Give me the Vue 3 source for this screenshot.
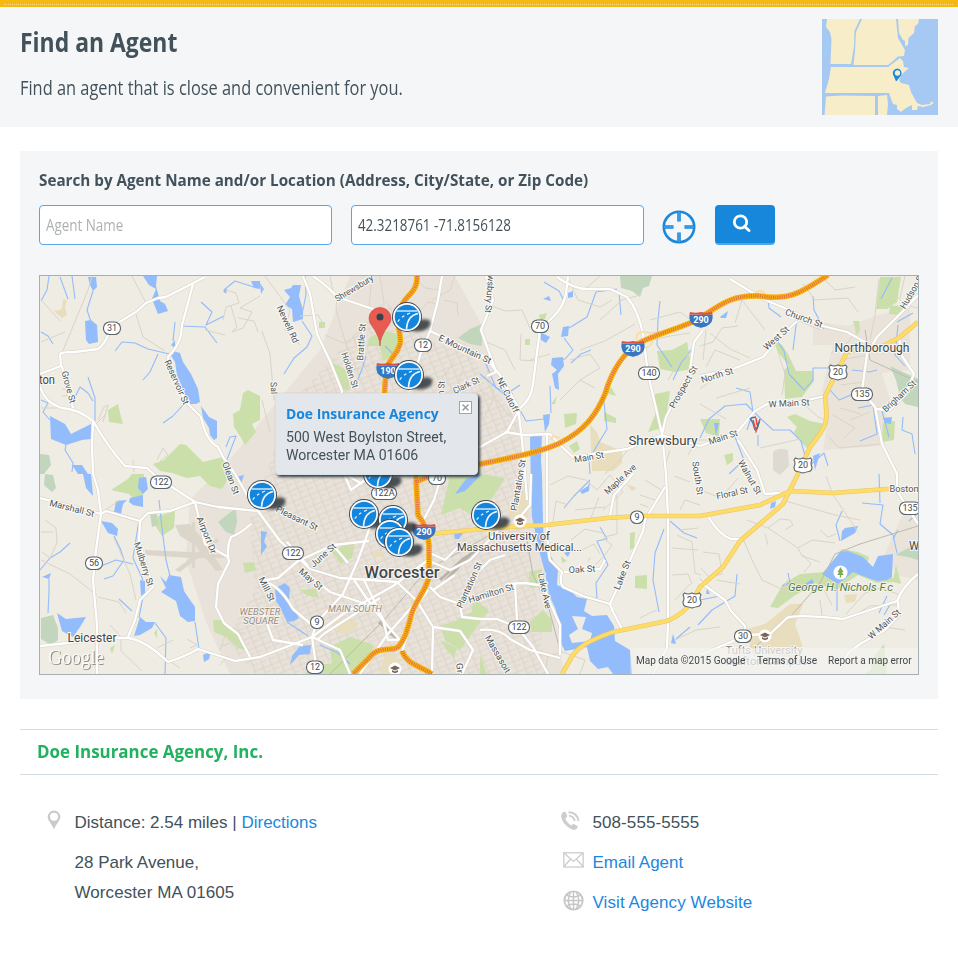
<script setup>
import { ref } from 'vue'

const agentName = ref('')
const place = ref('42.3218761 -71.8156128')
const popupOpen = ref(true)

// Condenses an element horizontally so its text spans the given width.
const vFit = {
  mounted(el, { value }) {
    el.style.transform = `scaleX(${value / el.offsetWidth})`
  },
}

const water = [
  'M170 354L173 351L180 353L183 362L191 374L198 389L200 402L196 404L190 404L183 392L177 375L175 362Z',
  'M201 406L209 417L217 421L217 438L214 440L210 435L209 428L203 418Z',
  'M143 276H157L156 286L160 301L165 304L168 311L158 314L152 299L156 289L149 285Z',
  'M88 277H96L97 287L93 291L90 285Z', 'M85 321L91 320L97 325L98 342L89 344L86 340Z',
  'M50 416L65 424L71 434L91 424V439L82 440L66 445L51 439Z', 'M72 465L82 465L88 474H78Z',
  'M171 345L175 340L175 348Z', 'M223 291L227 288L226 294Z', 'M251 281H260V289L254 288Z',
  'M160 576L166 582L169 575L181 577L184 591L188 597L195 607V621L188 622L180 616L176 601L161 592L166 588Z',
  'M140 617L146 622L155 622L152 628L140 635L134 636Z', 'M57 613L66 619L86 617L80 627L73 637L62 631Z',
  'M101 521L112 523L118 529L117 536L108 533Z', 'M83 474H91L93 496L86 488Z',
  'M139 478L146 477L148 489L143 494L138 488Z', 'M130 498L143 495V507L133 505L129 502Z',
  'M116 501L127 500L123 504L121 514L114 512Z', 'M140 580L145 581L145 593L141 596Z', 'M42 577L51 573L49 579Z',
  'M203 655L211 651L209 659L204 662Z', 'M236 477L244 475L241 484Z',
  'M284 290L291 288L293 285L301 285L299 296L303 310L303 319L293 322L292 309L285 305L290 297Z',
  'M260 283L264 289L261 294Z',
  'M261 531L267 532L264 542L267 546L261 555Z', 'M275 588L285 583L290 588L289 601L299 618L294 621L287 622L280 607L276 601Z',
  'M300 646L311 645L310 654L299 655L290 665L292 656Z', 'M482 474L466 479L455 494L465 491Z',
  'M552 358L563 357L564 366L558 374L559 390L555 388L552 374L557 370L551 365Z',
  'M563 327L569 326L568 336L561 337Z', 'M540 332L550 337L546 343L541 340Z', 'M543 415L550 414L549 424L545 432Z',
  'M530 437L542 433L541 460L542 474L543 522L544 541L558 571L557 585L571 591L577 597L587 599L584 611L592 616L607 615L614 626L615 641L630 650L632 674H613L608 667L598 669L590 661L587 647L565 651L560 641L556 610L549 594L545 572L540 554L532 517L531 490Z',
  'M454 533H463L459 539L455 539Z', 'M580 491L588 486L590 480L589 491L582 494Z', 'M564 553L571 550L568 557Z',
  'M822 574L840 552L848 551L863 557L873 567L878 556L893 554L892 577L887 580L877 581L860 575L853 572L838 584Z',
  'M842 531L845 528L858 526L855 533L841 541Z', 'M805 584L812 579L814 583L807 585Z', 'M813 456L820 453L815 470Z',
  'M714 423H719L716 436Z', 'M720 317L728 311L726 318L721 318Z', 'M883 418L892 417L891 424L885 423Z',
  'M707 588L710 594L706 594Z', 'M771 503L776 501L775 507L770 509Z', 'M673 634L676 644L671 643Z', 'M543 299L549 296L551 301Z', 'M568 293L573 291V297L568 298Z',
]

const parks = [
  'M153 464L164 460L180 444L186 445L203 462L223 457L229 466L236 474L227 480L222 489L210 486L200 476L187 478L172 473L160 471Z',
  'M111 490L128 479L132 474L144 474L143 496L138 504L129 494Z',
  'M233 414L240 410L243 393L248 390L260 396V420L252 424L256 432L245 445L240 436L234 427Z',
  'M108 410L118 404L120 413L123 424L109 422Z', 'M158 516L175 511L174 528L162 536L156 527Z',
  'M213 620L221 620L226 626L235 628L249 652L238 648L226 637L214 632Z', 'M110 648L115 645L112 654Z', 'M154 633L157 629L157 638Z',
  'M383 330L397 334V350L393 356L383 361L380 346L367 346L369 338Z', 'M328 362L340 366L347 371L350 389L342 391L336 376Z', 'M319 322L325 322V328L319 328Z',
  'M450 476H482V512L470 514L460 508L441 515Z', 'M330 551L355 542L352 558L340 564L336 556Z', 'M440 626L455 621L472 612L473 598L480 604L489 610L460 650L445 640Z',
  'M300 590L316 589L319 598L306 595Z', 'M350 637L374 645L363 674H305L312 664L332 664L330 647Z', 'M440 640L457 648L454 658L448 652Z',
  'M480 474L505 478L492 498L480 507Z', 'M480 655L487 674H480Z', 'M529 572L542 569L540 587L529 588Z', 'M530 622L543 610L552 620L552 632L532 632Z',
  'M657 351L672 350L687 342L692 369L675 372L660 369Z', 'M655 394L670 391L667 412L663 421L662 428L648 432L655 415Z',
  'M564 414L577 413L576 424L565 428Z', 'M604 412L616 418L616 423L604 421Z', 'M539 315L547 313L545 319L540 320Z', 'M525 339H530V345H525Z',
  'M606 393L611 387L616 396Z', 'M551 404L557 396L555 404Z', 'M569 446L577 441L580 449L574 453Z',
  'M880 277H901L897 302L887 309L876 309Z', 'M773 341L782 345L788 354L796 371L812 371L814 381L802 397L785 399L784 370L789 366L778 352Z',
  'M787 417L795 414L810 421L825 424L821 434L807 448L802 443L794 432L797 427Z', 'M700 419H720L719 437L706 433Z', 'M883 423L895 421L894 440L882 442Z',
  'M724 455L733 453V461L727 465Z', 'M853 321L859 321L860 330L857 336Z', 'M890 306L905 305L899 315L889 314Z',
  'M770 607L783 584L800 574L825 572L842 549L858 552L869 557L866 568L878 577L896 578L901 584L893 582L877 583L858 575L836 590L815 583L794 596L778 608Z',
  'M884 644L887 674H864L871 670V660Z', 'M635 576L647 575V589L635 588Z', 'M630 533L635 532L634 548L630 550Z', 'M587 645L598 644L600 648L588 650Z', 'M561 556L567 561L562 563Z', 'M896 565L901 583L893 580Z', 'M589 558L591 557L587 564Z', 'M243 563L254 562L256 570L245 573Z',
]

const reserves = [
  'M40 454L49 455L51 465L44 474H40Z', 'M45 474L53 475L56 488L52 492L44 485Z', 'M41 618L53 615L58 628L58 640L51 645L41 639Z',
  'M218 522L236 508L237 522L234 535L226 532Z', 'M150 513L157 514L158 525L152 527Z', 'M458 338L470 329L482 324V346L470 344Z',
  'M620 276H652L649 286L643 288L640 297L632 291L621 288Z', 'M890 366L918 379V407L905 404L900 397L896 380Z', 'M895 555L918 543V560L908 557Z',
]

const sands = [
  'M54 311L62 309L63 299L67 300L65 307L67 315L62 318Z', 'M590 424L598 434L600 442L622 451V463L613 471H592Z',
  'M747 629L765 624L790 604L803 604L795 624L803 647L799 659L752 651Z', 'M844 595L857 594L855 602L846 603Z', 'M335 620L353 619L358 628L342 634L333 627Z',
  'M508 505L527 489L528 517L509 518Z', 'M374 552H383V557H374Z', 'M387 650L400 660L397 674H379Z', 'M626 484L637 488L632 491Z',
]

const streams = [
  'M49 276L47 290L41 301', 'M60 277L68 299', 'M72 276L75 299', 'M93 291L87 310L91 322', 'M41 332L48 336L53 344',
  'M115 351L122 342L135 343L148 349L165 353L170 354', 'M158 354L150 372L143 380', 'M175 322L173 341', 'M180 326L205 327L217 343', 'M201 302L212 312L206 325L224 316',
  'M184 404L173 416L163 423', 'M75 397L80 387L88 393L93 401M88 377L95 398L95 421', 'M41 400L48 403L43 412L50 420', 'M66 445L65 450L73 463L72 472', 'M224 290L235 281L254 287',
  'M226 447L230 437L236 436L226 462L234 474', 'M159 500L162 528L166 560L170 576', 'M139 520L133 558L143 580M143 597L139 618', 'M155 623L166 638L165 674',
  'M101 566L116 560L133 564', 'M114 536L120 548L124 560L113 576L104 579', 'M70 543L60 552L50 558L40 570M49 579L49 592L48 613', 'M119 599L132 611', 'M195 622L199 649', 'M305 276L306 294L303 310M302 321L312 336L307 347L294 358L284 374',
  'M385 346L393 354', 'M366 356L362 369L354 389', 'M287 622L308 636M320 645L338 653L350 664', 'M520 385L505 395L480 374', 'M486 364L496 388L513 394',
  'M617 289L596 292L587 317L569 328M564 338L573 350L565 359L557 360', 'M571 363L581 354L591 350', 'M603 394L607 429L589 459L590 474', 'M550 386L551 413M520 410L526 421L544 419', 'M544 282L559 291L563 299',
  'M619 292L621 315', 'M660 301L658 320L657 345L672 367M691 350L681 363L673 380', 'M813 296L814 310L824 329', 'M768 299L769 308L781 317M797 317L793 350M778 342L784 351L789 374L804 390L813 380L813 368L829 368',
  'M852 370L870 372L877 370M851 395L839 400L830 390', 'M858 408L873 405L877 434L860 441', 'M700 438L709 419L725 406L746 404L760 418L773 430L790 430L801 441L808 467L824 453L828 466', 'M736 388L750 392L753 412L747 430M758 435L758 446',
  'M735 437L744 460L729 474', 'M903 417L902 430L912 434L915 454M882 411L889 437', 'M892 278L881 299M913 313L897 322', 'M898 325L895 355L905 366',
  'M590 480L574 496L564 508M600 527L607 539L597 541L608 565L596 583L597 600', 'M670 521L684 533L697 538', 'M664 529L655 553L653 580L659 612', 'M698 625L712 610L735 596L737 574',
  'M700 600L720 596M690 627L676 639', 'M842 511L836 525L840 541M862 503L883 505L880 524L893 535L897 553', 'M837 584V611M887 596L879 613M891 603L884 615', 'M879 474L880 503M920 511L909 521M893 539L898 530', 'M788 573L790 583L782 586',
]

const lanes = [
  'M62 353L88 290L92 276M41 342L65 332M132 276L146 303M136 314L143 337L165 351M133 460L134 472M205 330L225 335M41 300L60 321',
  'M223 320L226 307L239 303L236 293L226 290M231 306L237 327L232 332L243 328L252 312L240 308L260 296M238 318L254 321L258 332',
  'M41 408L58 408M98 420L104 407L108 405L103 422M106 414L96 424M62 389H67V396H62M157 460L163 448L168 455L160 461',
  'M265 276L290 310L285 330L300 345M262 331L270 354L274 400M330 276L333 292M337 297L336 310L353 368L345 390M372 276L369 307M380 276L384 303M300 316L318 315L325 327M325 335L343 343L360 335',
  'M349 370L370 366M413 276L425 288L440 290M455 276L450 290L432 300M420 311L428 302L436 304M444 300L457 303L458 315',
  'M262 400L270 432M455 361L442 378L455 392L462 371M482 340L505 350L515 370M492 306L505 311L522 310L530 328M487 370L495 398L510 417M480 390L493 400L485 416',
  'M567 276L578 300L600 307L612 300M585 289L600 276M640 295L622 300L600 320M635 324L605 341L580 350M530 360L550 354M521 334L520 360L537 361M570 360L590 354L600 368L580 380M560 400L580 380L595 388',
  'M650 320L680 312L700 326M649 333L665 331M652 340L670 336L690 333M694 350L680 360L668 380M700 389L712 380M716 398L750 388M700 404L726 419',
  'M700 346L713 342L722 328L738 326M710 333L730 349L750 358M706 367L715 350L740 360M706 330L703 360M735 323L742 300L765 330M778 352L785 374L782 395',
  'M795 319L820 330M803 284L815 300L848 298L858 312M821 276L835 290L855 287M879 279L875 315L870 340M897 296L905 305L918 308M905 276L900 298M840 360L868 355M841 385L864 382M831 353L846 344L860 328M833 415L855 428L844 438M870 412L850 420M840 408L861 414',
  'M805 405L818 417L825 420M829 437L839 448L880 444M760 448L800 439M688 455L697 440L720 440M670 450L665 465M630 447L620 460L605 474',
  'M41 560L70 574L97 595M98 597L119 602L126 613M45 520L56 528L57 543L50 558L42 552M114 538L130 574L136 600M41 532H53M100 514L120 500',
  'M110 625L121 637L121 651L142 671M187 639L197 645L190 648M180 668L168 660M157 648L173 640M244 633L224 631M225 636L220 650M222 646L240 639M228 656L220 665',
  'M550 485L568 476L586 480L597 490L610 475L623 492L603 510M568 505L556 501L553 522M575 510L605 507M591 518L599 497M571 540L585 529L603 533M580 551L594 544L600 554M570 570L590 570L605 555L612 545L603 538',
  'M609 490L617 496L617 534L604 537M645 480L663 491M640 495L655 500M648 507L640 504M612 611L617 622M640 618L650 613L657 610M560 651L585 660L580 674M545 674L548 655L562 653',
  'M674 476L690 482M680 510L685 500L700 505M680 530L698 528M672 548L698 550M677 535L692 542L695 573L701 575M672 575L688 574L692 584M675 600L690 584M675 640L696 630L720 627',
  'M703 552L719 554L722 574L709 577L701 568M708 590L700 578M743 539L753 562L762 580L790 593M747 520L768 528L798 548L802 556L820 562M768 545L765 534M768 528L780 519L790 520L793 525L785 530M798 548L812 540L835 543',
  'M716 580L740 584M782 500L835 515L860 520M826 476L832 493L858 532M700 490L721 498L738 478M804 572L811 564L803 555M788 580L777 600M820 600L822 615M846 614L865 593L880 588L898 594',
  'M852 617L870 606L898 605M832 605L824 590M750 645L755 656M870 640L885 627L905 630M820 530L828 537L836 534',
]

const roads = [
  'M40 374L61 366L60 354Q61 352 75 352L98 349Q106 344 111 327Q126 318 136 312L146 303L158 298L166 297L205 277',
  'M193 284L182 325L181 335Q178 347 168 357Q170 376 188 404L201 417Q206 441 218 447L223 457L235 474L250 500L260 513',
  'M40 386Q44 402 62 408Q78 409 93 421Q110 450 125 466L147 468L161 481L172 487L195 502L218 507L258 511L280 541L293 553L310 569L340 578L384 581L397 582L417 601L433 627L432 674',
  'M93 421L92 445L93 474L98 490L101 514L96 550L93 580L97 625L97 674', 'M62 366L66 385L73 408',
  'M40 498L101 514L106 511L140 521L148 513L170 511L195 502L205 544L228 557M251 524Q240 534 231 537Q226 548 229 562L218 584L216 607L224 623L238 634L250 657',
  'M140 521L139 542L153 587L140 600L135 620L128 637', 'M40 646L68 643L100 638H128Q145 640 168 662Q184 657 198 649Q220 656 235 661L260 657L312 637L343 614L393 586L428 560',
  'M303 276L310 294L317 334L330 361L342 391L330 450L344 474', 'M313 276Q330 288 337 297L373 309L385 325',
  'M442 276L438 300L430 331L420 355L410 391', 'M430 331L460 345L485 357L500 375L518 407L522 440L525 474L527 500', 'M568 276L566 294Q563 308 552 318L540 329L533 384Q531 400 520 408L507 432L480 447L450 456', 'M486 276L493 300L481 330L496 372L487 376',
  'M557 277Q575 290 590 289L610 289L627 297Q638 310 643 334L648 374L662 434L666 474L668 517L668 621L667 648L653 674', 'M505 432L524 435L550 434L560 445L573 457L627 449L662 435L700 446L737 432L755 411L767 404H790L825 396',
  'M730 279L763 299L787 309L823 326L847 332L865 342', 'M797 321L780 337L763 357L733 369L700 376', 'M662 434L666 417L690 370L694 342L703 330', 'M918 295L903 311L877 337L867 354L862 391L875 407L882 444L897 474L897 491L918 524',
  'M899 337L902 356L914 374L905 395L890 410L875 409', 'M700 655L733 641L745 635L770 634L787 618Q795 614 843 619L897 601Q903 586 918 574', 'M898 601L899 615L885 630L860 644L848 653L841 668',
  'M344 474L351 490L365 480M370 527L358 560L343 594L317 622L312 637L317 674M260 581Q278 582 293 609L312 625', 'M260 581L278 578L298 561L333 545L369 541M287 542L308 566M310 576L330 592L366 604M333 545L348 563M363 578L383 619L388 640L400 640',
  'M400 640L376 612L354 580M417 601L387 635L360 674M430 587L440 597L460 604L462 617L480 619L497 619L517 627L533 647L548 674M428 590L417 605L402 652', 'M480 630Q500 628 510 639L530 650L560 658', 'M433 627L460 631L473 650L462 674',
  'M442 474L434 500L422 523M427 560L450 570L470 560L494 535L500 528M480 570L490 560L505 555', 'M507 584L525 583L545 586M515 584L517 620M531 474L530 505L520 517M547 435L547 500Q547 550 550 560L562 572Q559 582 563 587L583 596L610 604L613 612L622 629',
  'M545 591L560 625L560 655M564 572L600 569L605 560', 'M610 604L627 567L643 531L645 520L665 487M610 515L614 495L633 474', 'M708 516Q718 534 731 539L740 539M700 582L725 600L731 611L745 626V640M738 440L757 470L765 494L780 493',
  'M345 474L362 484M262 610L273 640L303 645M312 637L340 650L350 674M317 640L325 633L380 598M430 553L445 560L460 545M433 590L455 575',
]

const highway = [
  'M417 276C418 292 406 295 402 305C394 325 402 333 400 344C396 358 388 358 386 372L384 400C395 440 417 450 416 478L418 515C425 524 427 530 429 545V577C425 592 416 600 412 613C407 630 406 638 398 647C391 652 379 645 369 658L353 674',
  'M402 651C407 664 418 665 432 674', 'M416 482C450 465 525 460 560 443C585 430 596 415 605 394C612 370 625 350 643 341C665 331 690 325 700 318C725 301 735 295 760 296C790 301 802 292 828 275',
]

const yellowRoads = [
  'M430 534L482 529L508 527L547 525L607 518L640 516L700 516L760 505L790 491L833 493L887 489H918',
  'M918 322L900 337L883 346L862 348L847 352L840 366L825 396C828 423 828 425 810 447L798 474L783 504L740 541L723 567L700 587C690 607 682 615 667 621L613 632C590 640 575 648 570 660L562 674',
]

const towns = [
  ['Northborough', 872, 352, 12, 75], ['Shrewsbury', 663, 445, 12.5, 69], ['Worcester', 402, 578, 16, 75],
  ['Leicester', 92, 642, 12, 49], ['ton', 47, 384, 12, 16], ['W', 914, 550, 12, 10],
]

// text, centre x, centre y, rotation, drawn length
const streets = [
  ['Reservoir St', 177, 382, 66, 48], ['Grove St', 69, 387, 75, 33], ['Newell Rd', 288, 324, 65, 40], ['Shrewsbury', 354, 288, -31, 43],
  ['Brattle St', 361, 342, -86, 37], ['Holden St', 350, 370, 72, 37], ['Clark St', 466, 385, -25, 28], ['E Mountain St', 465, 349, 25, 57],
  ['Sal', 274, 388, 88, 12], ['n St', 441, 388, -86, 14], ['wsbury St', 490, 294, 95, 38], ['NE Cutoff', 508, 395, 63, 38],
  ['Main St', 589, 457, -10, 30], ['Prospect St', 683, 387, -60, 47], ['Maple Ave', 620, 479, -43, 40], ['South St', 698, 478, 82, 34],
  ['Walnut St', 750, 477, 60, 38], ['Church St', 804, 318, 20, 39], ['West St', 776, 338, -42, 31], ['North St', 717, 375, -17, 33],
  ['W Main St', 789, 403, -3, 41], ['Main St', 723, 437, -18, 30], ['Hudson St', 912, 291, -60, 39], ['Brigham St', 899, 396, -43, 42],
  ['Marshall St', 72, 508, 14, 46], ['Airport Dr', 207, 535, 68, 39], ['Mulberry St', 144, 564, 72, 46], ['Olean St', 231, 478, 70, 34],
  ['Pleasant St', 297, 518, 26, 45], ['June St', 323, 555, -42, 31], ['May St', 311, 579, 40, 28], ['Mill St', 267, 589, 63, 26],
  ['Plantation St', 469, 585, -66, 49], ['Hamilton St', 491, 593, -17, 47], ['Massasoit', 498, 654, 60, 42], ['Lake Ave', 545, 591, 78, 36],
  ['Oak St', 582, 569, -3, 27], ['Lake St', 622, 575, -68, 31], ['Plantation St', 518, 485, -80, 52], ['Floral St', 732, 493, -12, 32],
  ['W Main St', 884, 624, -42, 40], ['Boston', 904, 489, 0, 29], ['Gr', 460, 668, 85, 10],
]

const ovals = [
  ['31', 112, 328], ['12', 423, 345], ['70', 540, 326], ['140', 649, 373], ['135', 862, 394], ['122', 161, 482], ['56', 94, 563],
  ['122', 293, 553], ['122A', 384, 493], ['70', 437, 478], ['9', 317, 622], ['12', 315, 667], ['9', 637, 517], ['122', 519, 627], ['30', 743, 636], ['135', 910, 508],
]
const usShields = [['20', 838, 372], ['20', 803, 465], ['20', 692, 600]]
const interstates = [['290', 701, 320], ['290', 633, 349], ['290', 424, 532], ['190', 388, 371]]
const markers = [[407, 317], [409, 375], [262, 495], [378, 474], [364, 514], [393, 520], [390, 534], [399, 542], [486, 515]]
const schools = [[520, 521], [395, 669], [765, 636]]
</script>

<template>
  <main class="page">
    <header class="hero">
      <div class="stitch"></div>
      <div class="hero-body">
        <div>
          <h1><span v-fit="157" class="fit">Find an Agent</span></h1>
          <p><span v-fit="383" class="fit">Find an agent that is close and convenient for you.</span></p>
        </div>
        <svg class="region" width="116" height="96" viewBox="0 0 116 96">
          <rect width="116" height="96" fill="#a6c9f4" />
          <g fill="#f7edc8">
            <path d="M5 0L4 8L8 13L9.500 20L8.500 45H29L32 28L32.500 12L38 0Z" />
            <path d="M40 0L34 13L33 32L31.500 46H66L71 42L76 37.500L82 37L83 31L76 19L74 0Z" />
            <path d="M76 0L77 14L81 21L83 22L83 27L86 26L86.500 19L92 14L93 7L96 5L97 0Z" />
            <path d="M9 48H66L78 39L81 42L82 48L87 49L80 55L77 61L79 64L87 66L89 73L95 84L100 86L108 85L109 82.500L112 83.500L109 86L101 88L96 87L95 91L90 91L90 86L84 89L79 93L75 90L75 86L71 85L67 74L3 74L7 60Z" />
            <path d="M4 77.500L20 76.500L53 77V96H2.500Z" />
            <path d="M56 77L65 76L66 85L65 96H56Z" />
          </g>
          <path d="M75.500 49.500a4.700 4.700 0 0 0-4.600 5.700l3.200 7.200l5-6a4.700 4.700 0 0 0-3.600-6.900Zm0 1.800a2.700 2.700 0 1 1 0 5.400a2.700 2.700 0 0 1 0-5.400Z" fill="#1a88dc" fill-rule="evenodd" />
        </svg>
      </div>
    </header>

    <section class="finder">
      <h2><span v-fit="549" class="fit">Search by Agent Name and/or Location (Address, City/State, or Zip Code)</span></h2>
      <form class="search" @submit.prevent>
        <label class="field"><input v-model="agentName" placeholder="Agent Name" /></label>
        <label class="field"><input v-model="place" /></label>
        <button class="locate" type="button">
          <svg width="34" height="34" viewBox="0 0 34 34" fill="none" stroke="#1a88dc">
            <circle cx="17" cy="17" r="15.200" stroke-width="2.600" />
            <path d="M17 2V11.500M17 22.500V32M2 17H11.500M22.500 17H32" stroke-width="3.600" />
            <path d="M17 2V11.500M17 22.500V32M2 17H11.500M22.500 17H32" stroke="#58aaf0" stroke-width="1" />
          </svg>
        </button>
        <button class="go" type="submit">
          <svg width="20" height="20" viewBox="0 0 20 20" fill="none" stroke="#fff">
            <circle cx="8.500" cy="8" r="6.200" stroke-width="2.800" />
            <path d="M12.500 12.500L17 16.500" stroke-width="3" stroke-linecap="round" />
          </svg>
        </button>
      </form>

      <div class="map">
        <svg class="canvas" width="878" height="398" viewBox="40 276 878 398">
          <defs>
            <pattern id="blocks" width="9" height="11" patternUnits="userSpaceOnUse" patternTransform="rotate(-22)">
              <path d="M0 3H9M3 0V11M3 8H9" fill="none" stroke="#d9d1c4" stroke-width=".8" />
            </pattern>
            <filter id="soft" x="-50%" y="-50%" width="200%" height="200%"><feGaussianBlur stdDeviation="1.500" /></filter>
            <g id="badge">
              <path d="M1 10Q11 0 22 3Q26 7 20 12Q10 17 1 12Z" fill="#2e363b" opacity=".85" filter="url(#soft)" />
              <circle r="15" fill="#3e4a52" /><circle r="14" fill="#fff" /><circle r="12.300" fill="#1485dc" />
              <g fill="none" stroke="#eaf6ff">
                <path d="M-10.500 -6H10.500" stroke-width="1.300" /><path d="M11 -3.500Q0 -1 -.5 12" stroke-width="1.500" />
                <path d="M3 -4Q-7 0 -10 6" stroke-width="1.300" stroke-dasharray="3 3" />
              </g>
            </g>
          </defs>

          <rect x="40" y="276" width="878" height="398" fill="#efece3" />
          <path d="M230 674L206 622L186 560L190 500L240 448L262 420L320 350L350 276H455L480 322L500 376L519 420L526 480L545 550L564 674Z" fill="#e8e2da" />
          <path d="M813 321L848 326L878 315L910 307V370L882 373L890 400L880 446L823 450L828 420L822 390L833 345H813Z" fill="#e9e3da" />
          <path d="M885 553L905 510L918 512V580L897 575Z" fill="#e9e3da" />
          <path d="M290 405L385 300L425 340L470 355L520 425L525 520L540 620L545 674H255L226 640L255 590L250 520Z" fill="url(#blocks)" />
          <path d="M773 452Q778 447 788 450L789 466L780 475L773 470Z" fill="#dfdad1" />
          <g fill="#dbd5ca"><path d="M145 550L190 552L225 555L224 558L190 558L145 555Z" /><path d="M175 525L190 524L207 545L223 570L216 571L195 545L180 536Z" /><path d="M192 522H195V568H192ZM175 570L217 538L219 541L180 572Z" /></g>
          <path v-for="d in parks" :key="d" :d="d" fill="#cadfaa" />
          <path v-for="d in reserves" :key="d" :d="d" fill="#c1d6bd" />
          <path v-for="d in sands" :key="d" :d="d" fill="#e8ddbd" />
          <path v-for="d in water" :key="d" :d="d" fill="#92bcfc" />
          <path d="M572 616L586 617L582 629L592 633L590 641L572 643L569 635L578 629Z" fill="#efece3" />
          <g fill="none" stroke-linejoin="round">
            <path v-for="d in streams" :key="d" :d="d" stroke="#92bcfc" stroke-width="1.100" />
            <path v-for="d in lanes" :key="d" :d="d" stroke="#dad4c8" stroke-width="1" />
            <path d="M750 651L790 617L820 583L835 554L860 544L918 526M527 540L533 575L548 605L560 650M330 674L384 620L427 570L490 535M865 330L870 360L918 382" stroke="#bdb9b1" />
            <path d="M440 580L462 560L480 548M445 581L470 555M385 630L400 640M379 622L396 636" stroke="#b8b3ab" stroke-width="3" />
            <path v-for="d in roads" :key="'c' + d" :d="d" stroke="#dad4c9" stroke-width="3.400" />
            <path v-for="d in roads" :key="d" :d="d" stroke="#fff" stroke-width="2.300" />
            <path v-for="d in yellowRoads" :key="'c' + d" :d="d" stroke="#e6c66c" stroke-width="4.600" />
            <path v-for="d in yellowRoads" :key="d" :d="d" stroke="#ffdc65" stroke-width="3.400" />
            <path d="M637 341Q635 333 642 332Q651 331 653 340Q651 347 645 348M755 296Q760 285 767 297M551 440Q552 434 560 438" stroke="#f8dfa4" stroke-width="1.800" />
            <path v-for="d in highway" :key="d" :d="d" stroke="#f8b00e" stroke-width="5.600" />
            <path v-for="d in highway" :key="'t' + d" :d="d" stroke="#df6f4a" stroke-width="3.400" stroke-dasharray="1 1.200" />
          </g>

          <g class="streets">
            <text v-for="([t, x, y, r, w], i) in streets" :key="i" :textLength="w" lengthAdjust="spacingAndGlyphs" :transform="`translate(${x} ${y}) rotate(${r})`" y="3.300">{{ t }}</text>
          </g>
          <g class="districts">
            <text x="260" y="615" textLength="41" lengthAdjust="spacingAndGlyphs">WEBSTER</text>
            <text x="261" y="624" textLength="36" lengthAdjust="spacingAndGlyphs">SQUARE</text>
            <text x="355" y="612" textLength="54" lengthAdjust="spacingAndGlyphs">MAIN SOUTH</text>
          </g>
          <g class="towns">
            <text v-for="[t, x, y, s, w] in towns" :key="t" :x="x" :y="y" :font-size="s" :textLength="w" lengthAdjust="spacingAndGlyphs" :class="{ city: s > 14 }">{{ t }}</text>
            <text x="519" y="540" font-size="10.500" textLength="62" lengthAdjust="spacingAndGlyphs">University of</text>
            <text x="519.500" y="551" font-size="10.500" textLength="125" lengthAdjust="spacingAndGlyphs">Massachusetts Medical...</text>
            <text class="campus" x="764" y="654" font-size="11" textLength="77" lengthAdjust="spacingAndGlyphs">Tufts University</text>
            <text class="campus" x="766" y="665" font-size="11" textLength="82" lengthAdjust="spacingAndGlyphs">Grafton Campus</text>
          </g>
          <text class="parkname" x="840.500" y="591" textLength="105" lengthAdjust="spacingAndGlyphs">George H. Nichols F.c</text>
          <circle cx="840.500" cy="572.500" r="7" fill="#fff" />
          <path d="M840.500 567l-3 5h1.600l-1.900 3h2.600v2.500h1.400V575h2.600l-1.900-3h1.600Z" fill="#78ad55" />

          <g v-for="([x, y], i) in schools" :key="'u' + i" :transform="`translate(${x} ${y})`">
            <circle r="6.500" fill="#fff" />
            <path d="M-5-1L0-3.500L5-1L0 1.500ZM-3 1L0 2.600L3 1V3L0 4.300L-3 3ZM4-1V3" fill="#79665a" />
          </g>

          <g class="shields">
            <g v-for="([t, x, y], i) in ovals" :key="'o' + i" :transform="`translate(${x} ${y})`">
              <rect :x="-(4.500 + t.length * 2)" y="-6" :width="9 + t.length * 4" height="12.500" rx="6" fill="#fff" stroke="#58626a" stroke-width="1.100" />
              <text y="3.400">{{ t }}</text>
            </g>
            <g v-for="([t, x, y], i) in usShields" :key="'s' + i" :transform="`translate(${x} ${y})`">
              <path d="M-7.500-7Q-4-5 0-7Q4-5 7.500-7L9-5Q7-2 9 2Q9 6 6 6.500Q3 7 0 8Q-3 7-6 6.500Q-9 6-9 2Q-7-2-9-5Z" fill="#fff" stroke="#58626a" stroke-width="1.100" />
              <text y="3.400">{{ t }}</text>
            </g>
            <g v-for="([t, x, y], i) in interstates" :key="'i' + i" :transform="`translate(${x} ${y})`">
              <path d="M-11.500-5.500H11.500Q13 3 5 6.500Q0 7.500 0 8Q0 7.500-5 6.500Q-13 3-11.500-5.500Z" fill="#3677c3" />
              <path d="M-11-8Q-5-6.500 0-8Q5-6.500 11-8L11.600-5.500H-11.600Z" fill="#dc5147" />
              <text class="white" y="3.100">{{ t }}</text>
            </g>
          </g>

          <path d="M380 346Q380 337 372 326A11 11 0 1 1 388 326Q380 337 380 346Z" fill="#e85b50" stroke="#c94d43" stroke-width=".6" />
          <circle cx="380" cy="317" r="3.500" fill="#35434a" />
          <g fill="none" stroke-width="1.600"><path d="M750 418L753 423L755 430" stroke="#3784cc" /><path d="M753 420L756 431L760 419M756 418L757 425" stroke="#dc5147" /><path d="M751 418L756 417M759 422L757 429" stroke="#51728b" /></g>
          <use v-for="([x, y], i) in markers" :key="'m' + i" href="#badge" :x="x" :y="y" />
          <text class="logo" x="48" y="664" textLength="56" lengthAdjust="spacingAndGlyphs">Google</text>
        </svg>

        <aside v-if="popupOpen" class="popup">
          <button type="button" class="close" @click="popupOpen = false">
            <svg width="13" height="13" viewBox="0 0 13 13"><rect x=".5" y=".5" width="12" height="12" fill="#fff" stroke="#a1a4a6" /><path d="M3.500 3.500L9.500 9.500M9.500 3.500L3.500 9.500" stroke="#929699" stroke-width="1.300" /></svg>
          </button>
          <h3><span v-fit="153" class="fit">Doe Insurance Agency</span></h3>
          <p><span v-fit="160" class="fit">500 West Boylston Street,</span><span v-fit="132" class="fit">Worcester MA 01606</span></p>
        </aside>
        <footer class="credits"><span v-fit="109" class="fit">Map data ©2015 Google</span><span v-fit="60" class="fit terms">Terms of Use</span><span v-fit="84" class="fit report">Report a map error</span></footer>
      </div>
    </section>

    <section class="result">
      <h2><span v-fit="226" class="fit">Doe Insurance Agency, Inc.</span></h2>
      <div class="details">
        <div class="where">
          <svg class="pin" width="14" height="20" viewBox="0 0 14 20"><path d="M7 .5A6.300 6.300 0 0 0 .7 7C.7 10.500 5 14 7 19.500C9 14 13.300 10.500 13.300 7A6.300 6.300 0 0 0 7 .5ZM7 2.700A4 4 0 1 1 7 10.700A4 4 0 0 1 7 2.700Z" fill="#c8cacb" fill-rule="evenodd" /></svg>
          <div>
            <p class="distance">Distance: 2.54 miles | <a>Directions</a></p>
            <p>28 Park Avenue,</p>
            <p class="spread">Worcester MA 01605</p>
          </div>
        </div>
        <ul>
          <li>
            <svg class="phone" width="20" height="20" viewBox="0 0 20 20"><path d="M4 .8Q1 2 1.200 6Q3 14 12 18.500Q15.500 20 17.800 16.500L17.300 15L13.800 13L12.300 13.500L11.300 14.600Q6.500 11.500 5.400 7.500L7 6L7.200 4.700L5.700 1.200Z" fill="#cbcdce" /><path d="M8.500 1.200Q17.500 1.500 18.500 10M9 4.600Q13.800 5.200 14.800 10" fill="none" stroke="#cbcdce" stroke-width="1.900" /></svg>
            <span class="spread">508-555-5555</span>
          </li>
          <li>
            <svg class="mail" width="21" height="16" viewBox="0 0 21 16" fill="none" stroke="#cbcdce" stroke-width="1.300"><rect x=".8" y=".8" width="19.400" height="14.200" /><path d="M1 1L10.500 9.500L20 1M1 14.500L7.500 7.200M20 14.500L13.500 7.200" /></svg>
            <a>Email Agent</a>
          </li>
          <li>
            <svg class="globe" width="21" height="21" viewBox="0 0 21 21" fill="none" stroke="#c5c7c8" stroke-width="1.500"><circle cx="10.500" cy="10.500" r="9.200" stroke-width="1.800" /><path d="M10.500 1V20M1 10.500H20M3.500 5Q10.500 9 17.500 5M3.500 16Q10.500 12 17.500 16M7.500 2.500Q3 10.500 7.500 18.500M13.500 2.500Q18 10.500 13.500 18.500" /></svg>
            <a class="spread">Visit Agency Website</a>
          </li>
        </ul>
      </div>
    </section>
  </main>
</template>

<style>
body { background: #fff; }
</style>

<style scoped>
* { box-sizing: border-box; }
h1, h2, h3, p, ul { margin: 0; padding: 0; }
button { border: 0; padding: 0; cursor: pointer; }
svg { display: block; flex: none; }
.page { width: 958px; height: 954px; overflow: hidden; color: #42515a; font-family: "Open Sans", "Noto Sans", sans-serif; }
.fit { display: inline-block; width: max-content; white-space: nowrap; transform-origin: left center; }
.hero { height: 127px; background: #f4f6f8; }
.stitch { height: 7px; padding: 4px 4px 0; background: #f5b90f; }
.stitch::before { content: ""; display: block; height: 1px; background: repeating-linear-gradient(90deg, #fbdc83 0 1px, #f5b90f 1px 2px); }
.hero-body { display: flex; justify-content: space-between; padding: 12px 20px 0; }
h1 { height: 46px; font-size: 26px; line-height: 47px; font-weight: 700; }
.hero p { height: 44px; font-size: 19.500px; line-height: 46px; font-weight: 500; }
.finder { height: 548px; margin: 24px 20px 0; padding: 18px 19px 0; background: #f4f6f8; }
.finder h2 { height: 36px; font-size: 15.500px; line-height: 22px; font-weight: 700; }
.search { display: flex; height: 40px; }
.field { width: 293px; height: 40px; margin-right: 19px; overflow: hidden; background: #fff; border: 1px solid #59a5ec; border-radius: 4px; }
.field input { display: block; width: 345px; height: 37px; padding: 0 7px; transform: scaleX(.845); transform-origin: left; border: 0; outline: 0; background: transparent; color: #42515a; font: 500 15.900px "Open Sans", sans-serif; }
.field input::placeholder { color: #adb0b2; opacity: 1; }
.locate { display: flex; align-items: center; width: 34px; height: 43px; margin-right: 18px; margin-left: -1px; background: transparent; }
.go { display: flex; justify-content: center; width: 60px; height: 40px; padding: 9px 6px 0 0; background: #1787dc; border-bottom: 2px solid #4fa5ec; border-radius: 4px; margin-left: 1px; }
.map { position: relative; width: 880px; height: 400px; margin-top: 30px; border: 1px solid #a6afb2; }
.canvas { font-family: Roboto, sans-serif; }
.canvas text { text-anchor: middle; }
.streets text { font-size: 9px; fill: #4f5558; stroke: #fbfaf6; stroke-width: 2px; paint-order: stroke; }
.towns text { fill: #3f474b; stroke: #f9f7f2; stroke-width: 2px; paint-order: stroke; }
.towns .city { font-weight: 500; }
.towns .campus { fill: #8d857e; }
.districts text { font-size: 9px; font-style: italic; fill: #958a7d; stroke: #f7f4ef; stroke-width: 1.500px; paint-order: stroke; }
.canvas .parkname { font-size: 11px; font-style: italic; fill: #547b49; stroke: #f5f6ec; stroke-width: 1.500px; paint-order: stroke; }
.shields text { font-size: 9px; fill: #414b51; }
.shields .white { fill: #fff; font-weight: 700; }
.canvas .logo { text-anchor: start; font: 21px "Liberation Serif", serif; fill: #fbfaf7; filter: drop-shadow(1px 1px .6px #8f8c86); }
.popup { position: absolute; top: 117px; left: 235px; width: 203px; height: 82px; padding: 10px 10px; background: #e3e6ea; border: 1px solid #d8e2ea; border-radius: 4px; box-shadow: 2px 2px 3px #303b42; }
.popup h3 { height: 24px; color: #1986dc; font-size: 13.500px; line-height: 21px; font-weight: 700; }
.popup p { color: #42515a; font: 14px/18px Roboto, sans-serif; }
.popup .fit { display: block; }
.close { position: absolute; top: 7px; right: 5px; }
.credits { position: absolute; right: 0; bottom: 0; display: flex; width: 288px; height: 26px; padding-left: 6px; background: linear-gradient(90deg, rgba(244, 244, 242, .3), rgba(244, 244, 242, .66) 12px); color: #42484b; font: 10.500px/26px Roboto, sans-serif; }
.credits .fit { width: auto; }
.credits .terms { position: absolute; left: 127px; }
.credits .report { position: absolute; left: 198px; }
.result { margin: 30px 20px 0; }
.result h2 { height: 46px; padding-left: 17px; border-top: 1px solid #d4dde4; border-bottom: 1px solid #d4dde4; color: #20b25f; font-size: 17px; line-height: 44px; font-weight: 700; }
.details { display: flex; padding: 33px 28px 0; font: 17px/30px "Liberation Sans", Arial, sans-serif; }
.where { display: flex; width: 515px; }
.pin { margin: 2px 13.500px 0 -1px; }
.distance { margin-bottom: 10px; }
.spread { letter-spacing: .08px; }
a { color: #1b87df; }
ul { list-style: none; }
li { display: flex; gap: 8.500px; height: 40px; }
li .mail { margin-top: 4px; }
li .globe { margin-top: 2px; }
li .phone { margin: 3px 4px 0 -3px; }
</style>
